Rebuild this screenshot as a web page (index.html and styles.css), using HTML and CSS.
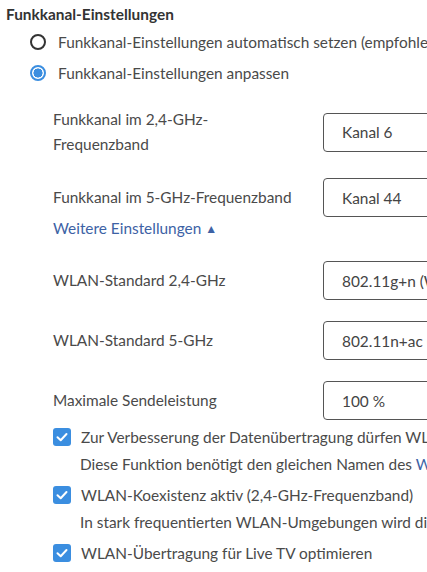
FILE: index.html
```html
<!DOCTYPE html>
<html lang="de">
<head>
<meta charset="utf-8">
<link rel="stylesheet" href="styles.css">
</head>
<body>
<div class="page">
  <h2 class="title">Funkkanal-Einstellungen</h2>
  <div class="radios">
    <label class="radio-row"><span class="radio"></span><span>Funkkanal-Einstellungen automatisch setzen (empfohlen)</span></label>
    <label class="radio-row"><span class="radio checked"></span><span>Funkkanal-Einstellungen anpassen</span></label>
  </div>
  <div class="fields">
    <div class="field-row first">
      <div class="field-label">Funkkanal im 2,4-GHz-Frequenzband</div>
      <div class="select">Kanal 6</div>
    </div>
    <div class="field-row">
      <div class="field-label">Funkkanal im 5-GHz-Frequenzband</div>
      <div class="select">Kanal 44</div>
    </div>
    <a class="more-link">Weitere Einstellungen <span class="tri">&#9650;</span></a>
    <div class="field-row">
      <div class="field-label">WLAN-Standard 2,4-GHz</div>
      <div class="select">802.11g+n (WLAN 4)</div>
    </div>
    <div class="field-row">
      <div class="field-label">WLAN-Standard 5-GHz</div>
      <div class="select">802.11n+ac (WLAN 5)</div>
    </div>
    <div class="field-row">
      <div class="field-label">Maximale Sendeleistung</div>
      <div class="select">100 %</div>
    </div>
    <div class="checks">
      <div class="check-item">
        <div class="check-row"><span class="box"><svg viewBox="0 0 18 18" width="18" height="18"><path d="M4.5 9.2 L7.7 12.2 L13.5 6" fill="none" stroke="#fff" stroke-width="2" stroke-linecap="round" stroke-linejoin="round"/></svg></span><span>Zur Verbesserung der Datenübertragung dürfen WLAN-Geräte Band Steering nutzen</span></div>
        <div class="desc">Diese Funktion benötigt den gleichen Namen des <a class="inline-link">WLAN-Funknetzes</a></div>
      </div>
      <div class="check-item">
        <div class="check-row"><span class="box"><svg viewBox="0 0 18 18" width="18" height="18"><path d="M4.5 9.2 L7.7 12.2 L13.5 6" fill="none" stroke="#fff" stroke-width="2" stroke-linecap="round" stroke-linejoin="round"/></svg></span><span>WLAN-Koexistenz aktiv (2,4-GHz-Frequenzband)</span></div>
        <div class="desc">In stark frequentierten WLAN-Umgebungen wird die Bandbreite reduziert</div>
      </div>
      <div class="check-item">
        <div class="check-row"><span class="box"><svg viewBox="0 0 18 18" width="18" height="18"><path d="M4.5 9.2 L7.7 12.2 L13.5 6" fill="none" stroke="#fff" stroke-width="2" stroke-linecap="round" stroke-linejoin="round"/></svg></span><span>WLAN-Übertragung für Live TV optimieren</span></div>
      </div>
    </div>
  </div>
</div>
</body>
</html>
```

FILE: styles.css
```css
html, body {
  margin: 0;
  padding: 0;
  background: #fff;
  overflow: hidden;
}
body {
  font-family: Lato, "Open Sans", sans-serif;
  font-size: 15.4px;
  color: #4a4a4a;
  width: 427px;
}
.page {
  padding: 4px 0 0 6px;
  white-space: nowrap;
}
.title {
  margin: 0;
  font-size: 15.4px;
  font-weight: 700;
  color: #333;
  line-height: 20px;
}
.radios {
  padding-left: 24px;
  margin-top: 2px;
}
.radio-row {
  display: flex;
  align-items: center;
  gap: 12px;
  height: 31px;
}
.radio {
  width: 12px;
  height: 12px;
  border: 2px solid #333;
  border-radius: 50%;
  flex: none;
  box-sizing: content-box;
}
.radio.checked {
  border-color: #3b8ee0;
  background: radial-gradient(circle, #3b8ee0 0 4.3px, #fff 4.8px);
}
.fields {
  padding-left: 47px;
  margin-top: 19px;
}
.field-row {
  display: flex;
  align-items: center;
  margin-bottom: 21px;
}
.field-label {
  width: 240px;
  white-space: normal;
  line-height: 25px;
  flex: none;
}
.select {
  margin-left: 30px;
  flex: none;
  width: 220px;
  height: 39px;
  box-sizing: border-box;
  border: 1px solid #555;
  border-radius: 4px;
  padding-left: 18px;
  display: flex;
  align-items: center;
  color: #444;
}
.more-link {
  display: block;
  color: #3d62a5;
  margin-top: -20px;
  margin-bottom: 22px;
  line-height: 20px;
}
.tri {
  font-size: 12px;
  vertical-align: 1px;
}
.checks {
  margin-top: -15px;
}
.check-item {
  margin-bottom: 4px;
}
.check-row {
  display: flex;
  align-items: center;
  gap: 10px;
  height: 22px;
}
.box {
  width: 18px;
  height: 18px;
  background: #3b8ee0;
  border-radius: 3px;
  flex: none;
  display: block;
}
.box svg { display: block; }
.desc {
  padding-left: 27px;
  line-height: 32px;
}
.inline-link {
  color: #3d62a5;
}
```
